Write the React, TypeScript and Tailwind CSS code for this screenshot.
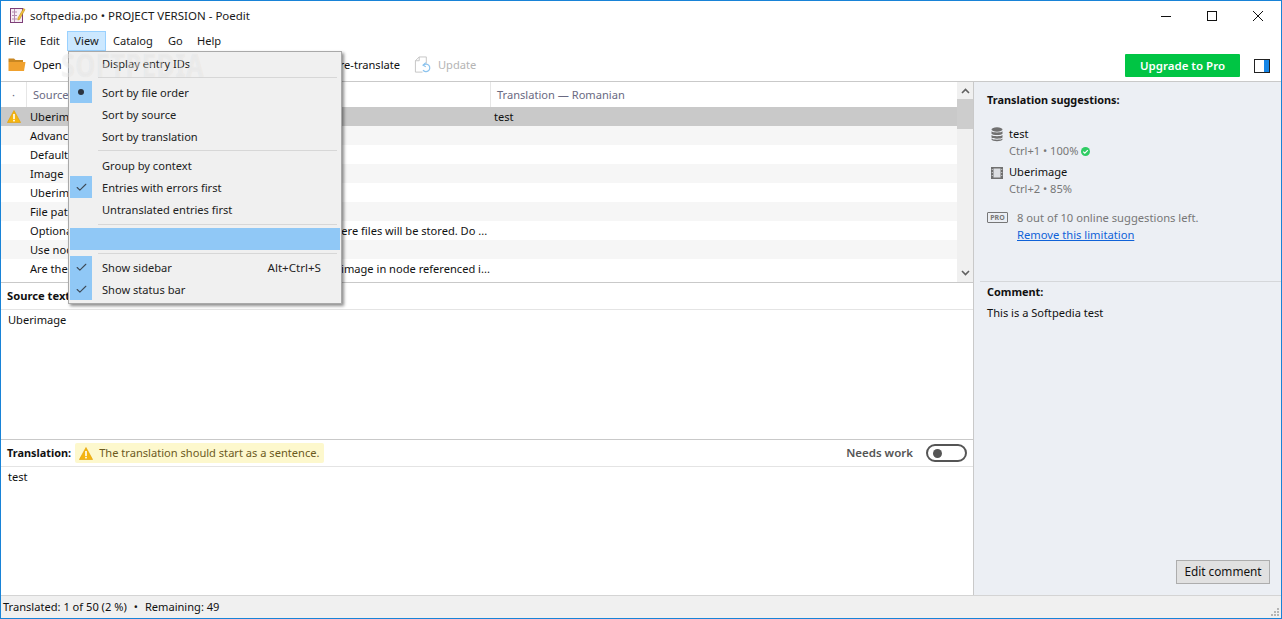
import React from 'react';
import { Check } from 'lucide-react';

const font = "font-['Noto_Sans','Open_Sans',sans-serif]";

// Entries of the catalog list
const rows = [
  { source: 'Uberimage', translation: 'test' },
  { source: 'Advanced', translation: '' },
  { source: 'Default', translation: '' },
  { source: 'Image', translation: '' },
  { source: 'Uberimage', translation: '' },
  { source: 'File path', translation: '' },
  { source: 'Optional subdirectory within the default file upload path where files will be stored. Do ...', translation: '' },
  { source: 'Use node', translation: '' },
  { source: 'Are the settings for the various image styles of the selected image in node referenced i...', translation: '' },
];

const WarningIcon = () => (
  <svg width="14" height="13" viewBox="0 0 14 13" className="shrink-0">
    <path d="M7 0.5 L13.6 12.5 H0.4 Z" fill="#f5b50f" stroke="#e09c00" strokeWidth="0.6" strokeLinejoin="round" />
    <rect x="6.2" y="4" width="1.6" height="5" fill="#fff" />
    <rect x="6.2" y="9.8" width="1.6" height="1.6" fill="#fff" />
  </svg>
);

const AppIcon = () => (
  <svg width="17" height="17" viewBox="0 0 17 17">
    <rect x="1.5" y="1.5" width="12" height="14" fill="#f7eef5" stroke="#7d3f78" />
    <path d="M3 5h5M3 8.5h5M3 12h5M5.5 2v13" stroke="#b58bb0" strokeWidth="1" />
    <path d="M14.5 1.5 L16 2.5 L10.5 12.5 L8.8 13 L9 11 Z" fill="#f4c63d" stroke="#b8871a" strokeWidth="0.6" />
  </svg>
);

const FolderIcon = () => (
  <svg width="18" height="15" viewBox="0 0 18 15">
    <path d="M0.5 1.5 H6 L7.5 3 H15 V5 H0.5 Z" fill="#c98722" />
    <path d="M0.5 14 V5 H17.5 L16 14 Z" fill="#f0a12e" />
  </svg>
);

const UpdateIcon = () => (
  <svg width="18" height="18" viewBox="0 0 19 19" fill="none">
    <path d="M9 17 H1.5 V5 L5.5 1 H13 V8" stroke="#c4c4c4" />
    <path d="M5.5 1 V5 H1.5" stroke="#c4c4c4" />
    <path d="M10 9.5 A4 4 0 1 1 9.5 15" stroke="#8cc3ee" strokeWidth="1.3" />
    <path d="M12.5 7 L9.5 9.6 L12.5 11.5" stroke="#8cc3ee" strokeWidth="1.2" />
  </svg>
);

const MenuItem = ({ label, mark, shortcut }: { label: string; mark?: 'check' | 'dot'; shortcut?: string }) => (
  <div className="flex h-[22px] items-center">
    <div className={`flex h-[22px] w-[22px] items-center justify-center ${mark ? 'bg-[#90c8f6]' : ''}`}>
      {mark === 'check' && <Check size={13} strokeWidth={2} className="text-[#3d4a57]" />}
      {mark === 'dot' && <div className="h-[6px] w-[6px] rounded-full bg-[#2b3440]" />}
    </div>
    <span className="ml-[10px] pt-[2px] text-[#222]">{label}</span>
    {shortcut && <span className="ml-auto mr-[19px] pt-[2px] text-[11.6px] text-[#222]">{shortcut}</span>}
  </div>
);

const MenuSeparator = ({ className }: { className: string }) => (
  <div className={`ml-[28px] mr-[3px] flex items-center ${className}`}>
    <div className="h-px w-full bg-[#d7d7d7]" />
  </div>
);

const ViewMenu = () => (
  <div className="absolute left-[67px] top-[50px] z-10 h-[253px] w-[274px] border border-[#a9a9a9] bg-[#f0f0f0] px-[1px] shadow-[2px_2px_3px_rgba(0,0,0,0.45)]">
    <MenuItem label="Display entry IDs" />
    <MenuSeparator className="h-[7px]" />
    <MenuItem label="Sort by file order" mark="dot" />
    <MenuItem label="Sort by source" />
    <MenuItem label="Sort by translation" />
    <MenuSeparator className="h-[7px]" />
    <MenuItem label="Group by context" />
    <MenuItem label="Entries with errors first" mark="check" />
    <MenuItem label="Untranslated entries first" />
    <MenuSeparator className="h-[8px]" />
    <div className="h-[22px] bg-[#90c8f6]" />
    <MenuSeparator className="h-[6px]" />
    <MenuItem label="Show sidebar" mark="check" shortcut="Alt+Ctrl+S" />
    <MenuItem label="Show status bar" mark="check" />
  </div>
);

export default function App() {
  return (
    <div className={`relative flex h-[619px] w-[1282px] flex-col overflow-hidden border border-[#1883d7] bg-white text-[11.1px] leading-[16px] text-[#111] ${font}`}>
      {/* title bar */}
      <div className="flex h-[30px] items-center pl-[8px] pb-[1px]">
        <AppIcon />
        <span className="ml-[4px] text-[11.5px] text-[#1a1a1a]">softpedia.po • PROJECT VERSION - Poedit</span>
        <div className="ml-auto flex items-center">
          <svg width="12" height="12" viewBox="0 0 12 12" className="mr-[34px]"><path d="M1 6.5h10" stroke="#111" /></svg>
          <svg width="12" height="12" viewBox="0 0 12 12" className="mr-[34px]"><rect x="1.5" y="1.5" width="9" height="9" fill="none" stroke="#111" /></svg>
          <svg width="12" height="12" viewBox="0 0 12 12" className="mr-[17px]"><path d="M1 1l10 10M11 1L1 11" stroke="#111" /></svg>
        </div>
      </div>

      {/* menu bar */}
      <div className="flex h-[20px] items-center text-[#1a1a1a]">
        <span className="ml-[7px] w-[18px]">File</span>
        <span className="ml-[14px] w-[21px]">Edit</span>
        <span className="ml-[6px] w-[39px] border border-[#99d1ff] bg-[#cce8ff] text-center leading-[18px]">View</span>
        <span className="ml-[7px] w-[41px]">Catalog</span>
        <span className="ml-[14px] w-[15px]">Go</span>
        <span className="ml-[14px]">Help</span>
      </div>

      {/* toolbar */}
      <div className="flex h-[31px] items-center border-b border-[#c9c9c9] pb-[3px] pl-[7px]">
        <FolderIcon />
        <span className="ml-[7px] w-[29px]">Open</span>
        <span className="ml-[271px] w-[68px] whitespace-nowrap">Pre-translate</span>
        <div className="ml-[13px]"><UpdateIcon /></div>
        <span className="ml-[6px] text-[#b4b4b4]">Update</span>
        <div className="ml-auto mr-[11px] mt-[2px] flex items-center">
          <div className="flex h-[23px] w-[115px] items-center justify-center rounded-[1px] bg-[#00c544] text-[11.5px] font-semibold text-white">Upgrade to Pro</div>
          <div className="ml-[14px] flex h-[14px] w-[16px] border border-[#222]">
            <div className="flex-1 bg-white" />
            <div className="w-[5px] bg-[#1585e6]" />
          </div>
        </div>
      </div>

      <div className="flex min-h-0 flex-1">
        {/* main column */}
        <div className="flex w-[973px] flex-col border-r border-[#c9c9c9]">
          {/* list */}
          <div className="flex h-[201px] border-b border-[#c9c9c9]">
            <div className="w-[956px] overflow-hidden">
              <div className="flex h-[25px] items-center text-[#6a6a82]">
                <div className="flex h-full w-[26px] items-center justify-center border-r border-[#e6e6e6]">·</div>
                <div className="flex h-full w-[464px] items-center border-r border-[#e6e6e6] pl-[6px]">Source text</div>
                <div className="pl-[6px]">Translation — Romanian</div>
              </div>
              {rows.map((row, i) => (
                <div key={i} className={`flex h-[19px] items-center ${i === 0 ? 'bg-[#c9c9c9]' : i % 2 === 1 ? 'bg-[#f6f6f6]' : 'bg-white'}`}>
                  <div className="flex w-[29px] pl-[6px]">{i === 0 && <WarningIcon />}</div>
                  <div className="w-[464px] whitespace-nowrap">{row.source}</div>
                  <div>{row.translation}</div>
                </div>
              ))}
            </div>
            <div className="relative w-[16px] bg-[#f0f0f0]">
              <div className="flex h-[17px] items-center justify-center">
                <svg width="9" height="6" viewBox="0 0 9 6"><path d="M1 5l3.5-3.5L8 5" fill="none" stroke="#606060" strokeWidth="1.6" /></svg>
              </div>
              <div className="h-[30px] bg-[#cdcdcd]" />
              <div className="absolute bottom-[1px] flex h-[17px] w-full items-center justify-center">
                <svg width="9" height="6" viewBox="0 0 9 6"><path d="M1 1l3.5 3.5L8 1" fill="none" stroke="#606060" strokeWidth="1.6" /></svg>
              </div>
            </div>
          </div>

          {/* source text */}
          <div className="flex h-[27px] items-center border-b border-[#e4e4e4] pl-[6px] text-[11.2px] font-bold">Source text:</div>
          <div className="h-[130px] border-b border-[#c9c9c9] pl-[7px] pt-[2px]">Uberimage</div>

          {/* translation */}
          <div className="flex h-[27px] items-center border-b border-[#e4e4e4] pl-[6px]">
            <span className="text-[10.9px] font-bold">Translation:</span>
            <div className="ml-[4px] flex h-[20px] w-[249px] items-center gap-[6px] rounded-[2px] bg-[#fdf8cd] pl-[4px] whitespace-nowrap text-[#6c5a1e]">
              <WarningIcon />
              <span>The translation should start as a sentence.</span>
            </div>
            <span className="ml-auto text-[11.5px] font-semibold text-[#555]">Needs work</span>
            <div className="ml-[13px] mr-[6px] flex h-[18px] w-[41px] items-center rounded-full border-2 border-[#555] pl-[5px]">
              <div className="h-[9px] w-[9px] rounded-full bg-[#555]" />
            </div>
          </div>
          <div className="flex-1 pl-[7px] pt-[2px]">test</div>
        </div>

        {/* sidebar */}
        <div className="flex flex-1 flex-col bg-[#eceff4]">
          <div className="ml-[6px] h-[200px] border-b border-[#d5d7da] pl-[7px] pt-[10px]">
            <div className="text-[10.9px] font-bold">Translation suggestions:</div>
            <div className="mt-[17px] flex pl-[4px]">
              <svg width="12" height="15" viewBox="0 0 12 15" className="mt-[2px]">
                <ellipse cx="6" cy="2.5" rx="5.5" ry="2.2" fill="#707070" />
                <path d="M.5 4.2c1 1.6 10 1.6 11 0v2.6c-1 1.6-10 1.6-11 0zM.5 8c1 1.6 10 1.6 11 0v2.6c-1 1.6-10 1.6-11 0zM.5 11.6c1 1.6 10 1.6 11 0v.9c-1 2.2-10 2.2-11 0z" fill="#707070" />
              </svg>
              <div className="ml-[6px]">
                <div className="leading-[18px]">test</div>
                <div className="flex items-center gap-[3px] text-[#777]">
                  Ctrl+1 • 100%
                  <svg width="9" height="9" viewBox="0 0 9 9">
                    <circle cx="4.5" cy="4.5" r="4.5" fill="#2ecc63" />
                    <path d="M2.2 4.6l1.6 1.6 3-3" fill="none" stroke="#fff" strokeWidth="1.2" />
                  </svg>
                </div>
              </div>
            </div>
            <div className="mt-[4px] flex pl-[4px]">
              <svg width="12" height="12" viewBox="0 0 12 12" className="mt-[4px]">
                <rect width="12" height="12" fill="#707070" />
                <rect x="2.5" y="1.5" width="7" height="9" fill="#dcdee2" />
                <path d="M.8 2h.9v1H.8zM.8 5h.9v1H.8zM.8 8h.9v1H.8zM10.3 2h.9v1h-.9zM10.3 5h.9v1h-.9zM10.3 8h.9v1h-.9z" fill="#dcdee2" />
              </svg>
              <div className="ml-[6px]">
                <div className="leading-[18px]">Uberimage</div>
                <div className="text-[#777]">Ctrl+2 • 85%</div>
              </div>
            </div>
            <div className="mt-[12px] flex">
              <div className="mt-[3px] flex h-[11px] w-[21px] items-center justify-center rounded-[1px] border border-[#777] text-[7px] font-bold text-[#777]">PRO</div>
              <div className="ml-[9px] text-[11.2px]">
                <div className="leading-[17px] text-[#777]">8 out of 10 online suggestions left.</div>
                <div className="leading-[17px] text-[#0f62d8] underline">Remove this limitation</div>
              </div>
            </div>
          </div>
          <div className="flex flex-1 flex-col pb-[11px] pl-[13px] pr-[11px] pt-[1px]">
            <div className="text-[10.9px] font-bold leading-[18px]">Comment:</div>
            <div className="mt-[4px]">This is a Softpedia test</div>
            <div className="ml-auto mt-auto flex h-[24px] w-[94px] items-center justify-center border border-[#adadad] bg-[#e1e1e1] pb-[2px] text-[11.8px]">Edit comment</div>
          </div>
        </div>
      </div>

      {/* status bar */}
      <div className="relative flex h-[23px] items-center border-t border-[#d4d4d4] bg-[#f0f0f0] pl-[2px]">
        Translated: 1 of 50 (2 %)<span className="mx-[7px]">•</span>Remaining: 49
        <svg width="10" height="10" viewBox="0 0 10 10" className="absolute bottom-[1px] right-[1px]">
          <path d="M7 1h2v2H7zM4 4h2v2H4zM7 4h2v2H7zM1 7h2v2H1zM4 7h2v2H4zM7 7h2v2H7z" fill="#b5b5b5" />
        </svg>
      </div>

      <ViewMenu />
      <div className="pointer-events-none absolute left-[60px] top-[46px] z-20 origin-left scale-x-[0.78] text-[32px] font-bold leading-[36px] tracking-[1px] text-white/40 [text-shadow:0_0_1px_rgba(0,0,0,0.08)]">SOFTPEDIA</div>
    </div>
  );
}
